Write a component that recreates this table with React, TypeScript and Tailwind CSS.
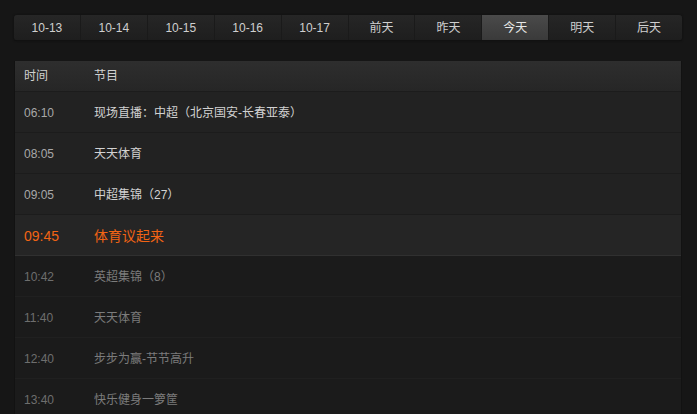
import React from "react";

const tabs = ["10-13", "10-14", "10-15", "10-16", "10-17", "前天", "昨天", "今天", "明天", "后天"];

type Row = { t: string; p: string; s: "past" | "now" | "future" };
const rows: Row[] = [
  { t: "06:10", p: "现场直播：中超（北京国安-长春亚泰）", s: "past" },
  { t: "08:05", p: "天天体育", s: "past" },
  { t: "09:05", p: "中超集锦（27）", s: "past" },
  { t: "09:45", p: "体育议起来", s: "now" },
  { t: "10:42", p: "英超集锦（8）", s: "future" },
  { t: "11:40", p: "天天体育", s: "future" },
  { t: "12:40", p: "步步为赢-节节高升", s: "future" },
  { t: "13:40", p: "快乐健身一箩筐", s: "future" },
];

const font = { fontFamily: '"Liberation Sans", "Noto Sans CJK SC", sans-serif' };

export default function App() {
  return (
    <div className="w-[697px] h-[414px] overflow-hidden bg-[#161616] pt-[15px] pl-[14px]" style={font}>
      <div className="w-[668px] h-[26px] flex rounded-[3px] bg-gradient-to-b from-[#262626] to-[#1e1e1e] border-b border-[#111] shadow-[0_0_2px_#0c0c0c]">
        {tabs.map((t, i) => (
          <div
            key={t}
            className={
              "flex-1 flex items-center justify-center text-[12px] " +
              (i === 7
                ? "bg-gradient-to-b from-[#4a4a4a] to-[#3a3a3a] text-[#e8e8e8]"
                : "text-[#cfcfcf]") +
              (i > 0 ? " border-l border-[#1a1a1a]" : "")
            }
          >
            {t}
          </div>
        ))}
      </div>
      <div className="mt-[20px] w-[668px] border-l border-r border-[#121212]">
        <div className="h-[31px] flex items-center bg-gradient-to-b from-[#2e2e2e] to-[#262626] text-[12px] text-[#d0d0d0] border-b border-[#1c1c1c]">
          <div className="w-[79px] pl-[9px]">时间</div>
          <div>节目</div>
        </div>
        {rows.map((r, i) => {
          const now = r.s === "now";
          const past = r.s === "past";
          return (
            <div
              key={i}
              className={
                "h-[41px] flex items-center border-b pt-[2px] " +
                (now
                  ? "bg-[#252525] border-[#303030] text-[#f26414]"
                  : past
                  ? "bg-[#222222] border-[#1c1c1c]"
                  : "bg-[#1b1b1b] border-[#202020]")
              }
            >
              <div
                className={
                  "w-[79px] pl-[9px] " +
                  (now ? "text-[14px]" : "text-[12px] ") +
                  (now ? "" : past ? " text-[#a8a8a8]" : " text-[#6e6e6e]")
                }
              >
                {r.t}
              </div>
              <div
                className={
                  (now ? "text-[14px]" : "text-[12px]") +
                  (now ? "" : past ? " text-[#d2d2d2]" : " text-[#7c7c7c]")
                }
              >
                {r.p}
              </div>
            </div>
          );
        })}
      </div>
    </div>
  );
}
